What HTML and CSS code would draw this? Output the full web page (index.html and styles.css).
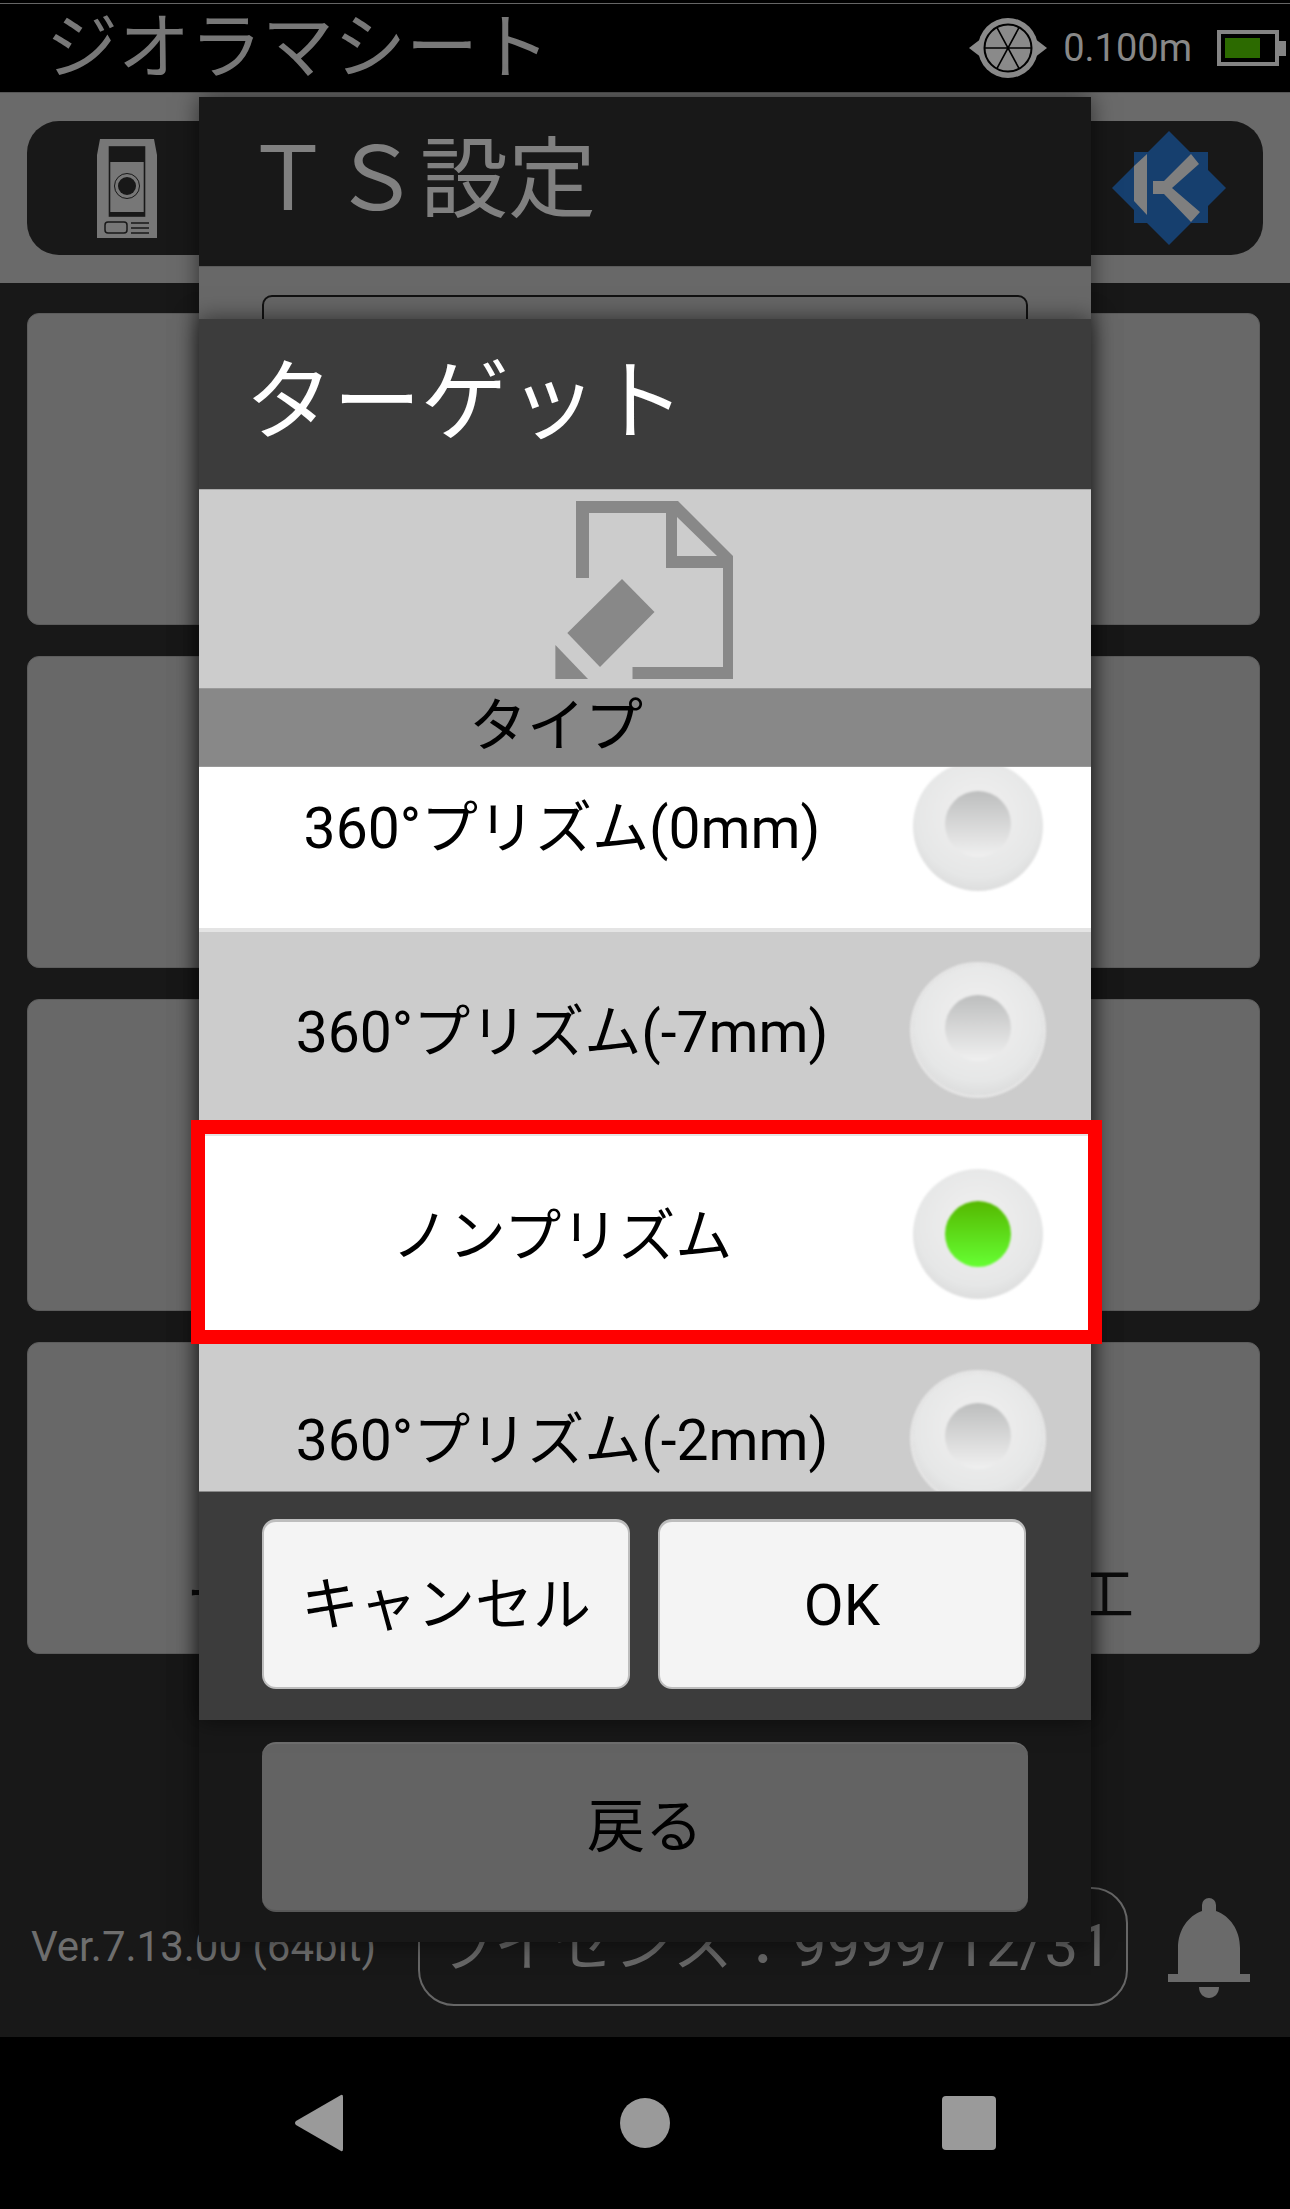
FILE: index.html
```html
<!DOCTYPE html>
<html lang="ja">
	<head>
		<meta charset="utf-8">
		<title>ジオラマシート</title>
		<link rel="stylesheet" href="styles.css">
	</head>
	<body>
		<div class="status">
			<span class="status-title">ジオラマシート</span>
			<svg class="compass" viewBox="0 0 80 62">
				<polygon points="1,31 14,21 14,41" fill="#8a8a8a"/>
				<polygon points="79,31 66,21 66,41" fill="#8a8a8a"/>
				<circle cx="40" cy="31" r="30" fill="#8a8a8a"/>
				<circle cx="40" cy="31" r="23.5" fill="#8a8a8a" stroke="#000" stroke-width="2"/>
				<path d="M17 31H63M29 10.6L51 51.4M51 10.6L29 51.4" stroke="#000" stroke-width="1.6"/>
			</svg>
			<span class="status-dist">0.100m</span>
			<div class="battery"><div class="battery-fill"></div></div>
		</div>

		<div class="band">
			<div class="band-bar">
				<svg class="device" viewBox="0 0 60 100">
					<polygon points="3,1 57,1 60,17 60,100 0,100 0,17" fill="#777"/>
					<rect x="12.5" y="9" width="35" height="69" fill="none" stroke="#181818" stroke-width="1.6"/>
					<rect x="12" y="9" width="36" height="15" fill="#181818"/>
					<rect x="12" y="74" width="36" height="4" fill="#181818"/>
					<circle cx="30" cy="48" r="12.5" fill="none" stroke="#181818" stroke-width="1"/>
					<circle cx="30" cy="48" r="9" fill="#181818"/>
					<rect x="8" y="84" width="22" height="11" rx="3" fill="none" stroke="#181818" stroke-width="1.5"/>
					<path d="M34 85H52M34 90H52M34 95H52" stroke="#181818" stroke-width="1.5"/>
				</svg>
				<svg class="logo" viewBox="0 0 120 120">
					<rect x="25" y="24" width="74" height="71" fill="#163f6e"/>
					<polygon points="60,3 117,60 60,117 3,60" fill="#163f6e"/>
					<polygon points="25,38 38,26 38,87 25,73" fill="#7f7f7f"/>
					<polygon points="90,36 82,26 55,53 44,53 44,66 55,66 82,94 91,84 63,60" fill="#7f7f7f"/>
				</svg>
			</div>
		</div>

		<div class="cards">
			<div class="card"></div>
			<div class="card"></div>
			<div class="card card-label"><span>ー</span></div>
			<div class="card card-label"><span>ー</span><span>工</span></div>
		</div>

		<div class="foot">
			<span class="version">Ver.7.13.00 (64bit)</span>
			<div class="license">ライセンス：9999/12/31</div>
			<svg class="bell" viewBox="0 0 82 100">
				<path d="M34 13V7a7 7 0 0 1 14 0V13C62 18 72 32 72 50V76H82V84H0V76H10V50C10 32 20 18 34 13Z" fill="#6a6a6a"/>
				<path d="M31 89H51C51 96 46 100 41 100C36 100 31 96 31 89Z" fill="#6a6a6a"/>
			</svg>
		</div>

		<div class="nav">
			<svg class="nav-back" viewBox="0 0 49 58"><path d="M47 1L2 27Q0 29 2 31L47 57Q49 58 49 55V3Q49 0 47 1Z" fill="#9a9a9a"/></svg>
			<div class="nav-home"></div>
			<div class="nav-recent"></div>
		</div>

		<!-- 後ろのダイアログ -->
		<div class="dialog dialog-ts">
			<div class="ts-title">ＴＳ設定</div>
			<div class="ts-body"><div class="ts-item"></div></div>
			<div class="ts-foot"><div class="btn-back">戻る</div></div>
		</div>

		<!-- ターゲット選択 -->
		<div class="dialog dialog-target">
			<div class="target-title">ターゲット</div>
			<div class="target-icon">
				<svg class="file-icon" viewBox="0 0 178 178">
					<path fill-rule="evenodd" d="M21 0H123L178 55V178H77.5V166H168V67H111V12H34V77H21ZM122 16V55H162Z" fill="#888"/>
					<polygon points="67,78 99.5,111 45,166 12.3,132" fill="#888"/>
					<polygon points="0.4,144 33,178 0.4,178" fill="#888"/>
				</svg>
			</div>
			<div class="target-head">タイプ</div>
			<div class="target-list">
				<div class="rows">
					<div class="row row-on">
						<span class="row-text">360°プリズム(0mm)</span>
						<div class="radio"><div class="radio-dot"></div></div>
					</div>
					<div class="row">
						<span class="row-text">360°プリズム(-7mm)</span>
						<div class="radio"><div class="radio-dot"></div></div>
					</div>
					<div class="row row-on">
						<span class="row-text">ノンプリズム</span>
						<div class="radio"><div class="radio-dot radio-dot-green"></div></div>
					</div>
					<div class="row">
						<span class="row-text">360°プリズム(-2mm)</span>
						<div class="radio"><div class="radio-dot"></div></div>
					</div>
				</div>
			</div>
			<div class="target-foot">
				<div class="btn">キャンセル</div>
				<div class="btn">OK</div>
			</div>
			<div class="mark"></div>
		</div>
	</body>
</html>
```

FILE: styles.css
```css
* {margin:0; padding:0; box-sizing:border-box;}
html, body {height:2209px;}
body {
	width:1290px;
	overflow:hidden;
	position:relative;
	background:#181818;
	font-family:"Roboto","Noto Sans CJK JP",sans-serif;
	color:#000;
	display:flex;
	flex-direction:column;
}

/* status */
.status {
	height:92px;
	flex:none;
	background:#000;
	border-top:3px solid #000;
	box-shadow:inset 0 1px 0 #666;
	display:flex;
	align-items:center;
	padding:0 11px 0 46px;
	color:#808080;
}
.status-title {font-size:72px; line-height:1; flex:1; color:#787878;}
.compass {width:80px; height:62px; margin-right:15px;}
.status-dist {font-size:38px; line-height:1; margin-right:25px; color:#888;}
.battery {
	width:62px;
	height:36px;
	border:4px solid #848484;
	position:relative;
	padding:4px;
}
.battery::after {
	content:"";
	position:absolute;
	left:58px;
	top:7px;
	width:7px;
	height:15px;
	background:#848484;
}
.battery-fill {width:35px; height:100%; background:#2c6a00;}

/* band */
.band {
	height:191px;
	flex:none;
	background:#6a6a6a;
	border-top:1px solid #555;
	padding:28px 27px 0;
}
.band-bar {
	height:134px;
	background:#181818;
	border-radius:32px;
	display:flex;
	align-items:center;
	justify-content:space-between;
	padding:0 34px 0 70px;
}
.device {width:60px; height:100px;}
.logo {width:120px; height:120px;}

/* cards */
.cards {
	flex:none;
	height:1374px;
	padding:30px 30px 0 27px;
	display:flex;
	flex-direction:column;
	gap:31px;
}
.card {
	height:312px;
	flex:none;
	background:#686868;
	border:1px solid #5c5c5c;
	border-radius:12px;
}
.card-label {
	display:flex;
	justify-content:space-between;
	align-items:flex-end;
	padding:0 125px 29px 158px;
	font-size:58px;
	line-height:1;
	color:#0c0c0c;
}

/* foot */
.foot {
	height:380px;
	display:flex;
	align-items:center;
	padding:0 40px 31px 31px;
	position:absolute;
	left:0;
	right:0;
	top:1657px;
	justify-content:flex-end;
}
.version {font-size:42px; line-height:1; color:#6e6e6e; margin-right:auto; align-self:flex-end; margin-bottom:38px;}
.license {
	width:710px;
	height:119px;
	align-self:flex-end;
	border:2px solid #666;
	border-radius:36px;
	color:#666;
	font-size:60px;
	line-height:113px;
	text-align:center;
	margin-right:40px;
	white-space:nowrap;
}
.bell {width:82px; height:100px; align-self:flex-end; margin-bottom:8px;}

/* nav */
.nav {
	position:absolute;
	left:0;
	right:0;
	top:2037px;
	height:172px;
	background:#000;
	display:grid;
	grid-template-columns:repeat(3,324px);
	justify-content:center;
	justify-items:center;
	align-items:center;
}
.nav-back {width:49px; height:58px; margin-right:6px;}
.nav-home {width:50px; height:50px; border-radius:50%; background:#9a9a9a;}
.nav-recent {width:54px; height:54px; border-radius:4px; background:#9a9a9a;}

/* dialogs */
.dialog {
	position:absolute;
	left:199px;
	width:892px;
	display:flex;
	flex-direction:column;
	box-shadow:0 0 22px rgba(0,0,0,.55);
}
.dialog-ts {top:97px; height:1845px; background:#666;}
.ts-title {
	height:170px;
	flex:none;
	background:#181818;
	border-bottom:1px solid #5a5a5a;
	color:#808080;
	font-size:88px;
	line-height:1;
	padding:39px 0 0 45px;
}
.ts-body {flex:1; padding:28px 63px 0; background:#686868;}
.ts-item {
	height:170px;
	border:2px solid #111;
	border-radius:10px;
	background:#666;
}
.ts-foot {flex:none; height:222px; background:#181818; padding:22px 63px 0;}
.btn-back {
	height:170px;
	border-radius:14px;
	background:#636363;
	border-top:2px solid #6e6e6e;
	border-bottom:2px solid #585858;
	font-size:58px;
	line-height:166px;
	text-align:center;
}

.dialog-target {top:319px; height:1401px; background:#3c3c3c;}
.target-title {
	height:170px;
	flex:none;
	color:#fff;
	font-size:88px;
	line-height:1;
	padding:39px 0 0 46px;
}
.target-icon {
	height:199px;
	flex:none;
	background:#ccc;
	border-top:1px solid #aaa;
	padding:11px 0 0 356px;
}
.file-icon {display:block; width:178px; height:178px;}
.target-head {
	height:79px;
	flex:none;
	background:#888;
	border-top:1px solid #999;
	border-bottom:1px solid #999;
	font-size:58px;
	line-height:74px;
	padding-right:178px;
	text-align:center;
}
.target-list {height:725px; flex:none; overflow:hidden; border-bottom:1px solid #888;}
.rows {margin-top:-39px;}
.row {
	height:204px;
	background:#ccc;
	border-bottom:4px solid #e4e4e4;
	display:flex;
	align-items:center;
	padding-right:48px;
}
.row-on {background:#fff;}
.row-text {
	flex:1;
	text-align:center;
	font-size:57px;
	line-height:1;
	white-space:nowrap;
	padding-left:12px;
}
.radio {
	width:130px;
	height:130px;
	flex:none;
	border-radius:50%;
	background:radial-gradient(circle at 50% 42%,#ececec 30%,#e6e7e7 62%,#cdcdcd 100%);
	filter:blur(.8px);
	box-shadow:0 0 0 3px #e6e6e6;
	display:flex;
	align-items:center;
	justify-content:center;
	margin-top:-4px;
}
.row-on .radio {box-shadow:none;}
.radio-dot {
	width:66px;
	height:66px;
	margin-top:-4px;
	border-radius:50%;
	background:linear-gradient(#bdbebe,#f0f0f0);
}
.radio-dot-green {background:linear-gradient(#55b800,#66ff33); margin-top:0;}
.target-foot {
	flex:1;
	display:flex;
	gap:28px;
	padding:27px 65px 0 63px;
}
.btn {
	flex:1;
	height:170px;
	background:#f4f4f4;
	border:2px solid #bdbdbd;
	border-top-width:3px;
	border-radius:14px;
	font-size:58px;
	line-height:1;
	display:flex;
	align-items:center;
	justify-content:center;
}
.mark {
	position:absolute;
	left:-8px;
	top:801px;
	width:911px;
	height:224px;
	border:14px solid #f00;
}
```
